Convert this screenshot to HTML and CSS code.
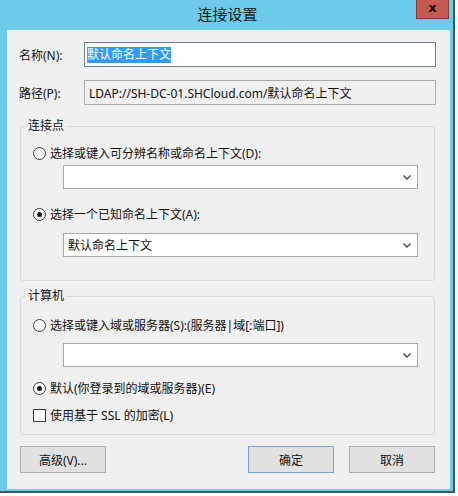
FILE: index.html
```html
<!DOCTYPE html>
<html lang="zh-CN">
<head>
<meta charset="utf-8">
<title>连接设置</title>
<link rel="stylesheet" href="styles.css">
</head>
<body>
<div class="window">
  <div class="titlebar">
    <span class="title">连接设置</span>
    <span class="close">x</span>
  </div>
  <div class="client">
    <div class="field name-row">
      <span class="label">名称(N):</span>
      <div class="textbox focus"><span class="sel">默认命名上下文</span></div>
    </div>
    <div class="field path-row">
      <span class="label">路径(P):</span>
      <div class="textbox readonly">LDAP://SH-DC-01.SHCloud.com/默认命名上下文</div>
    </div>

    <fieldset class="group g1">
      <legend>连接点</legend>
      <div class="opt o1"><span class="radio"></span><span>选择或键入可分辨名称或命名上下文(D):</span></div>
      <div class="combo c1"><span class="val"></span><svg class="chev" width="8" height="5" viewBox="0 0 8 5"><polyline points="0.5,0.5 4,4 7.5,0.5" fill="none" stroke="#444" stroke-width="1.4"/></svg></div>
      <div class="opt o2"><span class="radio on"></span><span>选择一个已知命名上下文(A):</span></div>
      <div class="combo c2"><span class="val">默认命名上下文</span><svg class="chev" width="8" height="5" viewBox="0 0 8 5"><polyline points="0.5,0.5 4,4 7.5,0.5" fill="none" stroke="#444" stroke-width="1.4"/></svg></div>
    </fieldset>

    <fieldset class="group g2">
      <legend>计算机</legend>
      <div class="opt o3"><span class="radio"></span><span>选择或键入域或服务器(S):(服务器|域[:端口])</span></div>
      <div class="combo c3"><span class="val"></span><svg class="chev" width="8" height="5" viewBox="0 0 8 5"><polyline points="0.5,0.5 4,4 7.5,0.5" fill="none" stroke="#444" stroke-width="1.4"/></svg></div>
      <div class="opt o4"><span class="radio on"></span><span>默认(你登录到的域或服务器)(E)</span></div>
      <div class="opt o5"><span class="check"></span><span>使用基于 SSL 的加密(L)</span></div>
    </fieldset>

    <div class="buttons">
      <button class="btn">高级(V)...</button>
      <span class="spacer"></span>
      <button class="btn default">确定</button>
      <button class="btn">取消</button>
    </div>
  </div>
</div>
</body>
</html>
```

FILE: styles.css
```css
html, body {
  margin: 0;
  padding: 0;
  background: #ffffff;
}
body {
  font-family: "Noto Sans", "Noto Sans CJK SC", sans-serif;
  font-size: 12px;
  color: #111;
}
.window {
  width: 455px;
  height: 493px;
  box-sizing: border-box;
  background: #6ccaea;
  padding: 0 3px 2px 7px;
  display: flex;
  flex-direction: column;
  border-right: 2px solid #3d5663;
  border-bottom: 2px solid #3d5663;
}
.titlebar {
  position: relative;
  height: 30px;
  flex: none;
  display: flex;
  align-items: center;
  justify-content: center;
  padding-right: 2px;
}
.title {
  font-family: "Noto Sans CJK SC", sans-serif;
  font-size: 15px;
  color: #1a1a1a;
  margin-top: -3px;
}
.close {
  position: absolute;
  right: 1px;
  top: 0;
  width: 33px;
  height: 19px;
  box-sizing: border-box;
  background: #c75a4e;
  border: 1px solid #8a3a33;
  border-top: none;
  color: #111;
  font-family: "DejaVu Sans", sans-serif;
  font-weight: bold;
  font-size: 13px;
  line-height: 16px;
  text-align: center;
}
.client {
  flex: 1;
  background: #f0f0f0;
  padding: 12px 14px 0 13px;
  display: flex;
  flex-direction: column;
}
.field {
  display: flex;
  align-items: center;
}
.field .label {
  width: 64px;
  flex: none;
  margin-left: -1px;
  padding-right: 1px;
}
.textbox {
  flex: 1;
  height: 25px;
  box-sizing: border-box;
  border: 1px solid #a4a8ad;
  background: #fff;
  display: flex;
  align-items: center;
  padding-left: 2px;
  white-space: nowrap;
}
.textbox.focus {
  border-color: #6f8193;
}
.textbox.readonly {
  background: #f0f0f0;
  border-color: #a9a9a9;
  padding-left: 4px;
}
.sel {
  background: #3399ff;
  color: #fff;
  line-height: 16px;
}
.path-row {
  margin-top: 13px;
}
.group {
  margin: 12px 1px 0 0;
  padding: 0 16px 0 12px;
  border: 1px solid #dcdcdc;
  border-radius: 3px;
  min-width: 0;
}
.group legend {
  padding: 0 2px;
  margin-left: -7px;
  line-height: 18px;
}
.g1 { padding-bottom: 23px; }
.g2 { margin-top: 6px; padding-bottom: 10px; }
.opt {
  display: flex;
  align-items: center;
  height: 18px;
  gap: 4px;
  white-space: nowrap;
}
.radio {
  width: 13px;
  height: 13px;
  box-sizing: border-box;
  border: 1px solid #3a3a3a;
  border-radius: 50%;
  background: #fff;
  display: flex;
  align-items: center;
  justify-content: center;
  flex: none;
}
.radio.on::after {
  content: "";
  width: 5px;
  height: 5px;
  border-radius: 50%;
  background: #1a1a1a;
}
.check {
  width: 13px;
  height: 13px;
  box-sizing: border-box;
  border: 1px solid #3a3a3a;
  background: #fff;
  flex: none;
}
.combo {
  margin-left: 30px;
  height: 24px;
  box-sizing: border-box;
  border: 1px solid #a9a9a9;
  background: #fff;
  display: flex;
  align-items: center;
  padding: 0 6px 0 4px;
}
.combo .val { flex: 1; }
.chev { display: block; }
.o1 { margin-top: 9px; }
.c1 { margin-top: 3px; }
.o2 { margin-top: 16px; }
.c2 { margin-top: 10px; }
.o3 { margin-top: 11px; }
.c3 { margin-top: 9px; }
.o4 { margin-top: 12px; }
.o5 { margin-top: 9px; }
.buttons {
  display: flex;
  gap: 15px;
  margin: 11px 1px 0 0;
}
.spacer { flex: 1; }
.btn {
  width: 86px;
  height: 27px;
  box-sizing: border-box;
  background: #e1e1e1;
  border: 1px solid #adadad;
  font-family: "Noto Sans", "Noto Sans CJK SC", sans-serif;
  font-size: 12px;
  color: #111;
  padding: 0;
}
.btn.default {
  border-color: #7aa5d1;
}
```
